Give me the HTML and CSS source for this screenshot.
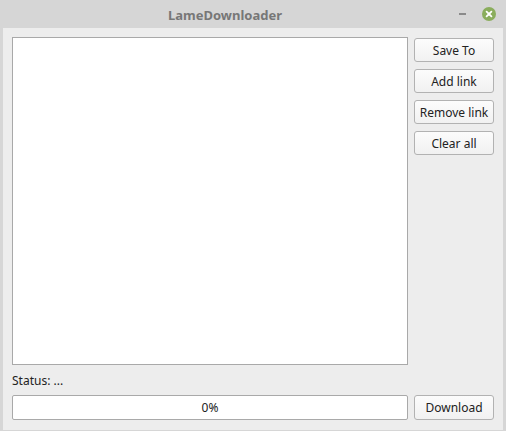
FILE: index.html
```html
<!DOCTYPE html>
<html>
<head>
<meta charset="utf-8">
<link rel="stylesheet" href="styles.css">
</head>
<body>
<div class="window">
  <div class="titlebar">
    <div class="title">LameDownloader</div>
    <div class="controls">
      <span class="minimize"></span>
      <span class="close">
        <svg width="14" height="14" viewBox="0 0 14 14">
          <circle cx="7" cy="7" r="7" fill="#8aad5c"/>
          <path d="M4.6 4.6 L9.4 9.4 M9.4 4.6 L4.6 9.4" stroke="#fff" stroke-width="1.8" stroke-linecap="round"/>
        </svg>
      </span>
    </div>
  </div>
  <div class="content">
    <div class="main">
      <div class="listbox"></div>
      <div class="side">
        <button class="btn">Save To</button>
        <button class="btn">Add link</button>
        <button class="btn">Remove link</button>
        <button class="btn">Clear all</button>
      </div>
    </div>
    <div class="status">Status: ...</div>
    <div class="bottom">
      <div class="progress">0%</div>
      <button class="btn">Download</button>
    </div>
  </div>
</div>
</body>
</html>
```

FILE: styles.css
```css
html, body {
  margin: 0;
  padding: 0;
  background: #d6d6d6;
}
body {
  width: 506px;
  height: 431px;
  font-family: "Noto Sans", "Open Sans", sans-serif;
  font-size: 12px;
  color: #222;
}
.window {
  width: 506px;
  height: 431px;
  box-sizing: border-box;
  padding: 0 3px 3px 3px;
  display: flex;
  flex-direction: column;
  background: #d6d6d6;
}
.titlebar {
  height: 28px;
  flex: none;
  display: flex;
  align-items: center;
  position: relative;
}
.title {
  flex: 1;
  text-align: center;
  font-weight: bold;
  font-size: 13px;
  color: #777777;
  padding-right: 56px;
  padding-top: 2px;
}
.controls {
  position: absolute;
  right: 7px;
  top: 7px;
  display: flex;
  align-items: center;
  gap: 16px;
}
.minimize {
  width: 7px;
  height: 2px;
  background: #8a8a8a;
  display: block;
}
.close {
  display: block;
  width: 14px;
  height: 14px;
}
.close svg { display: block; }
.content {
  flex: 1;
  background: #ededed;
  padding: 9px 9px 10px 9px;
  display: flex;
  flex-direction: column;
}
.main {
  display: flex;
  gap: 6px;
  height: 328px;
}
.listbox {
  flex: 1;
  background: #fff;
  border: 1px solid #a9a9a9;
}
.side {
  width: 80px;
  display: flex;
  flex-direction: column;
  gap: 7px;
  padding-top: 1px;
}
.btn {
  width: 80px;
  height: 24px;
  box-sizing: border-box;
  border: 1px solid #b2b2b2;
  border-radius: 3px;
  background: linear-gradient(#fcfcfc, #f1f1f1);
  font-family: "Noto Sans", "Open Sans", sans-serif;
  font-size: 12px;
  color: #222;
  padding: 0;
  margin: 0;
}
.status {
  height: 29px;
  line-height: 29px;
  padding-top: 1px;
}
.bottom {
  display: flex;
  gap: 6px;
  height: 25px;
}
.progress {
  flex: 1;
  box-sizing: border-box;
  height: 25px;
  border: 1px solid #a9a9a9;
  border-radius: 2px;
  background: #fff;
  text-align: center;
  line-height: 23px;
}
.bottom .btn {
  height: 25px;
}
```
